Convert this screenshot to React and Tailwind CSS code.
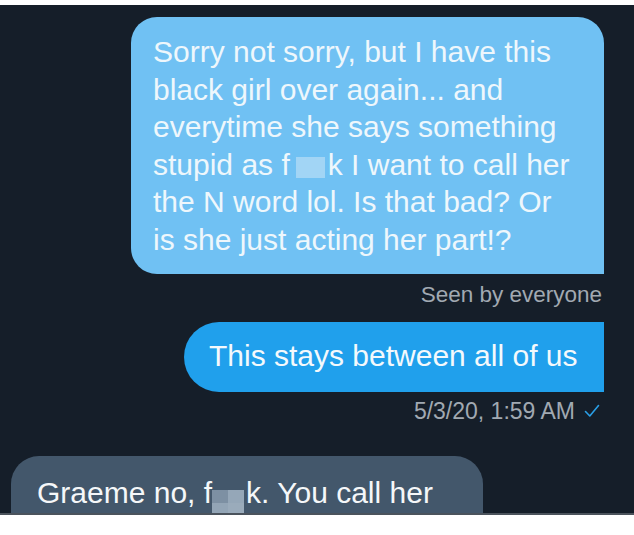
function Censor({ className }) {
  return <span className={`inline-block ${className}`} />;
}

function App() {
  return (
    <div
      className="h-[535px] w-[634px] overflow-hidden bg-white pt-[5px]"
      style={{ fontFamily: '"Liberation Sans", Arial, sans-serif' }}
    >
      <div className="h-[510px] overflow-hidden border-b-2 border-[#4b535c] bg-[#151e29]">
        <div className="flex flex-col items-end pr-[30px] pt-[12px]">
          <div className="w-[473px] rounded-[26px] rounded-br-none bg-[#70c1f3] pb-4 pl-[22px] pt-4 text-[30px] leading-[37.5px] text-[#eef7fc]">
            <div className="whitespace-nowrap">Sorry not sorry, but I have this</div>
            <div className="whitespace-nowrap">black girl over again... and</div>
            <div className="whitespace-nowrap">everytime she says something</div>
            <div className="whitespace-nowrap">
              stupid as f
              <Censor className="ml-[6px] mr-[3px] h-[21px] w-[29px] bg-[#a2d5f5] align-[-3px]" />
              k I want to call her
            </div>
            <div className="whitespace-nowrap">the N word lol. Is that bad? Or</div>
            <div className="whitespace-nowrap">is she just acting her part!?</div>
          </div>

          <p className="mr-[2px] mt-[7px] text-[22.5px] leading-[28px] text-[#a1a9b2]">Seen by everyone</p>

          <div className="mt-[13px] h-[70px] w-[420px] rounded-l-[35px] bg-[#20a0ec] pl-[25px] pt-[15px] text-[30px] leading-[37.5px] whitespace-nowrap text-[#f4f9fc]">
            This stays between all of us
          </div>

          <div className="mr-[4px] mt-[5px] flex items-center gap-[9px] text-[23px] leading-[28px] text-[#a1a9b2]">
            <span>5/3/20, 1:59 AM</span>
            <svg width="16" height="14" viewBox="0 0 16 14" fill="none">
              <path d="M1.5 7.5 L5.8 12 L14.5 1.5" stroke="#2a9fe6" strokeWidth="1.6" strokeLinecap="round" strokeLinejoin="round" />
            </svg>
          </div>
        </div>

        <div className="ml-[11px] mt-[31px] h-[120px] w-[472px] rounded-t-[28px] bg-[#43576b] pl-[26px] pt-[18px] text-[30px] leading-[37.5px] whitespace-nowrap text-[#f5f7f9]">
          Graeme no, f
          <span className="ml-[0px] mr-[2px] inline-grid h-[27px] w-[32px] grid-cols-2 grid-rows-2 align-baseline">
            <span className="bg-[#7d90a3]" />
            <span className="bg-[#95a7b8]" />
            <span className="bg-[#93a5b6]" />
            <span className="bg-[#9aabbb]" />
          </span>
          k. You call her
        </div>
      </div>
    </div>
  );
}

export default App;
